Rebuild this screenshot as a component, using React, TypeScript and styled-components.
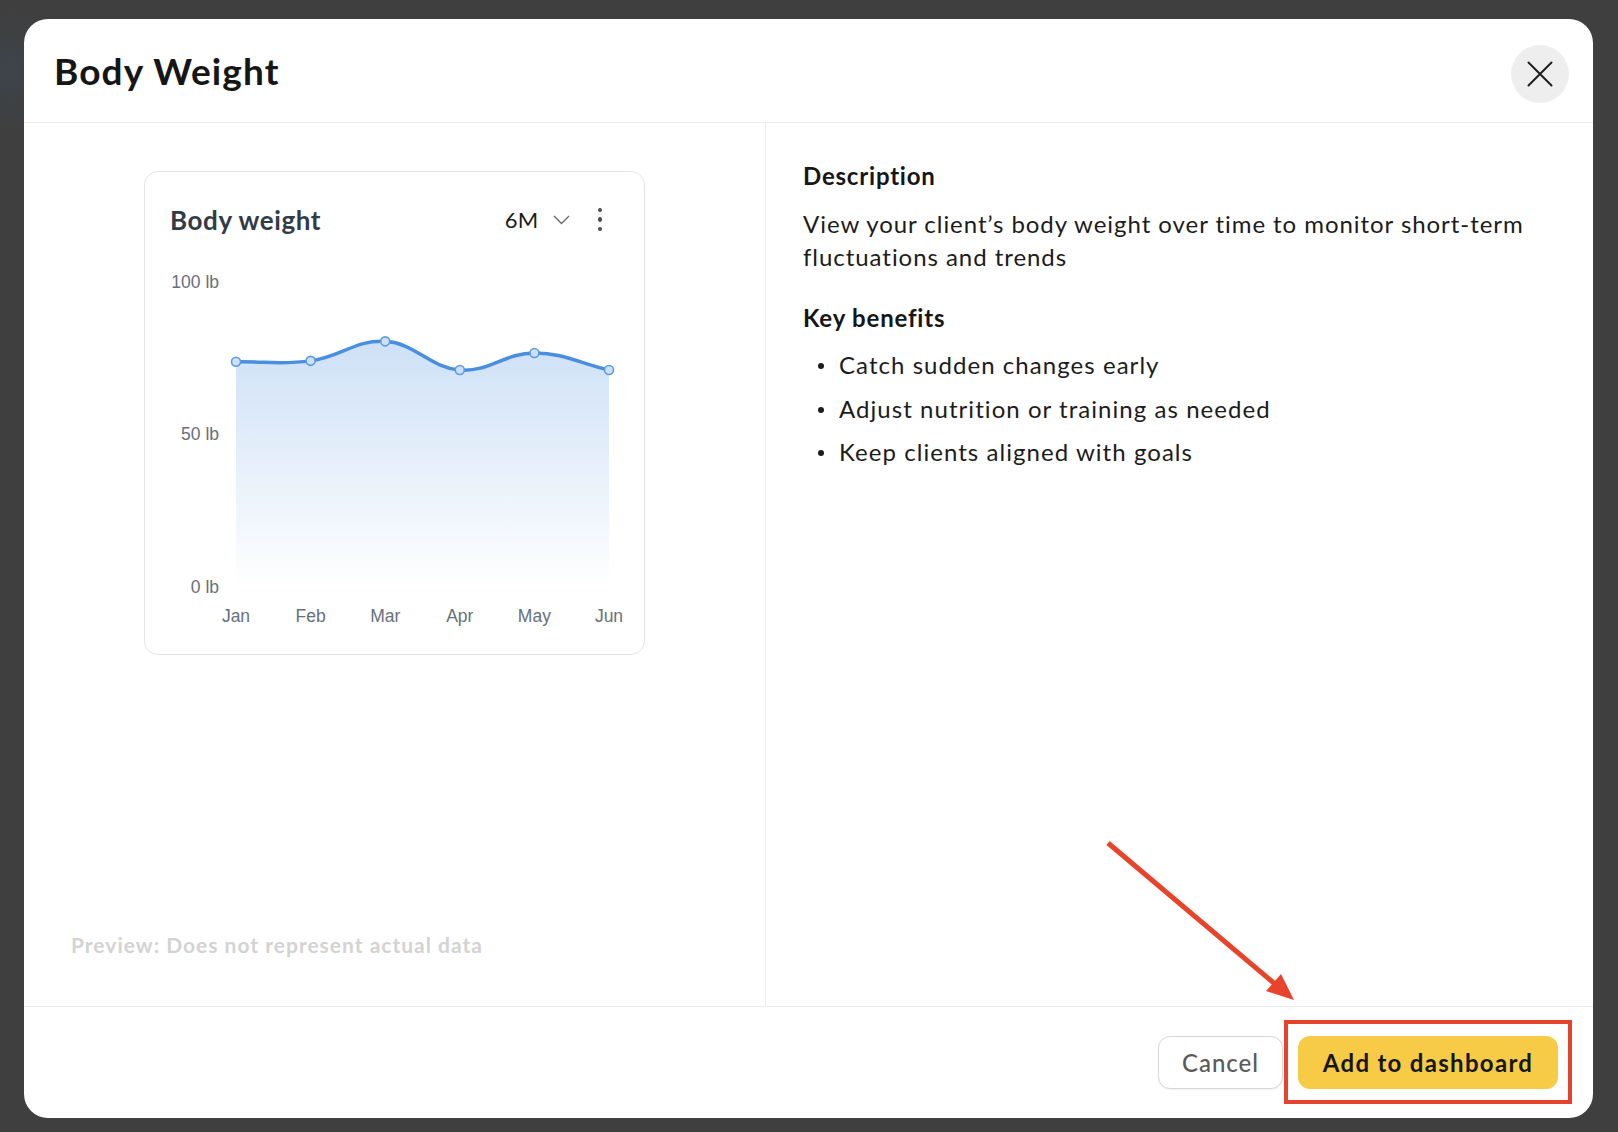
import styled, { createGlobalStyle } from 'styled-components';

const GlobalStyle = createGlobalStyle`
  html, body {
    margin: 0;
    padding: 0;
  }
  body {
    background: #3f3f3f;
    font-family: 'Lato', 'Noto Sans', sans-serif;
    color: #1a1a1a;
  }
  * {
    box-sizing: border-box;
  }
`;

const Backdrop = styled.div`
  position: relative;
  width: 100vw;
  height: 100vh;
  padding: 19px 25px 14px 24px;
  display: flex;
  background:
    radial-gradient(ellipse 40px 60px at 10px 70px, rgba(60, 72, 82, 0.6), transparent),
    #3f3f3f;
  overflow: hidden;
`;

const Modal = styled.div`
  flex: 1;
  display: flex;
  flex-direction: column;
  background: #fff;
  border-radius: 24px;
  overflow: hidden;
`;

const Header = styled.header`
  height: 104px;
  flex-shrink: 0;
  display: flex;
  align-items: center;
  justify-content: space-between;
  padding: 0 24px 0 30px;
  border-bottom: 1px solid #ececec;
`;

const Title = styled.h1`
  margin: 0;
  font-size: 37px;
  font-weight: 700;
  color: #161616;
  letter-spacing: 1.1px;
`;

const CloseButton = styled.button`
  width: 58px;
  height: 58px;
  border-radius: 50%;
  border: none;
  background: #eeeeee;
  display: flex;
  align-items: center;
  justify-content: center;
  cursor: pointer;
  margin-top: 6px;
  padding: 0;
`;

const Body = styled.div`
  flex: 1;
  display: grid;
  grid-template-columns: 742px 1fr;
  min-height: 0;
`;

const PreviewPane = styled.section`
  display: flex;
  flex-direction: column;
  align-items: center;
  justify-content: space-between;
  border-right: 1px solid #ececec;
  padding: 48px 0 49px;
`;

const PreviewNote = styled.p`
  align-self: flex-start;
  margin: 0 0 0 47px;
  font-size: 21px;
  font-weight: 700;
  letter-spacing: 1px;
  color: #d3d3d3;
`;

const Card = styled.div`
  width: 501px;
  height: 484px;
  border: 1.5px solid #e4e4e4;
  border-radius: 14px;
  display: flex;
  flex-direction: column;
`;

const CardHeader = styled.div`
  height: 97px;
  flex-shrink: 0;
  display: flex;
  align-items: center;
  padding: 0 32px 2px 25px;
`;

const CardTitle = styled.h3`
  margin: 0;
  flex: 1;
  font-size: 26px;
  font-weight: 700;
  letter-spacing: 0.6px;
  color: #333b47;
`;

const RangePicker = styled.div`
  display: flex;
  align-items: center;
  gap: 14px;
  font-size: 22px;
  letter-spacing: 0.3px;
  color: #1c1c1c;
  margin-right: 18px;
`;

const Kebab = styled.div`
  display: flex;
  flex-direction: column;
  gap: 5px;
  padding: 0 10px;

  span {
    width: 4.5px;
    height: 4.5px;
    border-radius: 50%;
    background: #4d4d4d;
  }
`;

const ChartSvg = styled.svg`
  display: block;
  width: 100%;
  flex: 1;
  font-family: 'Liberation Sans', Arial, sans-serif;
`;

const InfoPane = styled.section`
  padding: 38px 37px 0;
`;

const Heading = styled.h2`
  margin: 0;
  font-size: 24px;
  line-height: 30px;
  font-weight: 700;
  letter-spacing: 0.8px;
  color: #161616;
`;

const Paragraph = styled.p`
  margin: 16px 0 30px;
  font-size: 24px;
  line-height: 33px;
  letter-spacing: 0.95px;
  color: #1c1c1c;
`;

const Benefits = styled.ul`
  list-style: none;
  margin: 15px 0 0;
  padding: 0 0 0 36px;
  display: flex;
  flex-direction: column;
  gap: 10.5px;
`;

const Benefit = styled.li`
  position: relative;
  font-size: 24px;
  line-height: 33px;
  letter-spacing: 1.05px;
  color: #1c1c1c;

  &::before {
    content: '';
    position: absolute;
    left: -21px;
    top: 15px;
    width: 6px;
    height: 6px;
    border-radius: 50%;
    background: #1c1c1c;
  }
`;

const Footer = styled.footer`
  height: 112px;
  flex-shrink: 0;
  border-top: 1px solid #ececec;
  display: flex;
  align-items: center;
  justify-content: flex-end;
  gap: 15px;
  padding: 0 35px 0 0;
`;

const Button = styled.button<{ $primary?: boolean }>`
  width: ${(p) => (p.$primary ? '260px' : '125px')};
  height: 53px;
  padding: 0;
  border-radius: 12px;
  font-family: 'Lato', 'Noto Sans', sans-serif;
  font-size: 24px;
  font-weight: ${(p) => (p.$primary ? 700 : 500)};
  letter-spacing: ${(p) => (p.$primary ? '1.3px' : '1px')};
  cursor: pointer;
  border: ${(p) => (p.$primary ? 'none' : '1px solid #d8d8d8')};
  background: ${(p) => (p.$primary ? '#f7cb46' : '#fff')};
  color: ${(p) => (p.$primary ? '#161616' : '#5a5a5c')};
  box-shadow: ${(p) => (p.$primary ? 'none' : '0 1px 2px rgba(0, 0, 0, 0.06)')};
`;

const Highlight = styled.div`
  position: absolute;
  left: 1284px;
  top: 1020px;
  width: 288px;
  height: 84px;
  border: 4px solid #e5432b;
  pointer-events: none;
`;

const Pointer = styled.svg`
  position: absolute;
  left: 1100px;
  top: 835px;
  pointer-events: none;
`;

type Pt = { x: number; y: number };

const months = ['Jan', 'Feb', 'Mar', 'Apr', 'May', 'Jun'];
const weights = [74.5, 74.8, 81.2, 71.8, 77.4, 71.8];

// chart geometry, in the svg's own units
const xAt = (i: number) => 91 + i * 74.6;
const yAt = (lb: number) => 320 - lb * 3.05;

function splinePath(pts: Pt[], tension = 0.4) {
  const ctrl = pts.map((cur, i) => {
    const prev = pts[i - 1] ?? cur;
    const next = pts[i + 1] ?? cur;
    const d01 = Math.hypot(cur.x - prev.x, cur.y - prev.y);
    const d12 = Math.hypot(next.x - cur.x, next.y - cur.y);
    const s01 = d01 / (d01 + d12 || 1);
    const s12 = d12 / (d01 + d12 || 1);
    const fa = tension * s01;
    const fb = tension * s12;
    return {
      prev: { x: cur.x - fa * (next.x - prev.x), y: cur.y - fa * (next.y - prev.y) },
      next: { x: cur.x + fb * (next.x - prev.x), y: cur.y + fb * (next.y - prev.y) },
    };
  });
  let d = `M${pts[0].x},${pts[0].y}`;
  for (let i = 1; i < pts.length; i++) {
    const a = ctrl[i - 1].next;
    const b = ctrl[i].prev;
    d += ` C${a.x},${a.y} ${b.x},${b.y} ${pts[i].x},${pts[i].y}`;
  }
  return d;
}

function WeightChart() {
  const pts = weights.map((w, i) => ({ x: xAt(i), y: yAt(w) }));
  const line = splinePath(pts);
  const area = `${line} L${pts[pts.length - 1].x},${yAt(0)} L${pts[0].x},${yAt(0)} Z`;

  return (
    <ChartSvg viewBox="0 0 499 385" preserveAspectRatio="none">
      <defs>
        <linearGradient id="weightFill" x1="0" y1="0" x2="0" y2="1">
          <stop offset="0%" stopColor="#4a8ee0" stopOpacity="0.27" />
          <stop offset="100%" stopColor="#4a8ee0" stopOpacity="0" />
        </linearGradient>
      </defs>
      {[100, 50, 0].map((lb) => (
        <text key={lb} x={74} y={yAt(lb) - 1} textAnchor="end" dominantBaseline="middle" fontSize="17.5" fill="#68707c">
          {lb} lb
        </text>
      ))}
      <path d={area} fill="url(#weightFill)" />
      <path d={line} fill="none" stroke="#4a8ee0" strokeWidth="3.5" />
      {pts.map((p, i) => (
        <circle key={i} cx={p.x} cy={p.y} r="4.5" fill="#cfe0f6" stroke="#5b9be4" strokeWidth="1.6" />
      ))}
      {months.map((m, i) => (
        <text key={m} x={xAt(i)} y={348} textAnchor="middle" dominantBaseline="middle" fontSize="17.5" fill="#68707c">
          {m}
        </text>
      ))}
    </ChartSvg>
  );
}

export default function App() {
  return (
    <Backdrop>
      <GlobalStyle />
      <Modal>
        <Header>
          <Title>Body Weight</Title>
          <CloseButton aria-label="Close">
            <svg width="26" height="26" viewBox="0 0 26 26">
              <path d="M1.5 1.5 L24.5 24.5 M24.5 1.5 L1.5 24.5" stroke="#1f1f1f" strokeWidth="2" strokeLinecap="round" />
            </svg>
          </CloseButton>
        </Header>

        <Body>
          <PreviewPane>
            <Card>
              <CardHeader>
                <CardTitle>Body weight</CardTitle>
                <RangePicker>
                  6M
                  <svg width="17" height="10" viewBox="0 0 17 10">
                    <path d="M1 1 L8.5 8.5 L16 1" fill="none" stroke="#6b6b6b" strokeWidth="1.4" />
                  </svg>
                </RangePicker>
                <Kebab>
                  <span />
                  <span />
                  <span />
                </Kebab>
              </CardHeader>
              <WeightChart />
            </Card>
            <PreviewNote>Preview: Does not represent actual data</PreviewNote>
          </PreviewPane>

          <InfoPane>
            <Heading>Description</Heading>
            <Paragraph>
              View your client’s body weight over time to monitor short-term fluctuations and trends
            </Paragraph>
            <Heading>Key benefits</Heading>
            <Benefits>
              <Benefit>Catch sudden changes early</Benefit>
              <Benefit>Adjust nutrition or training as needed</Benefit>
              <Benefit>Keep clients aligned with goals</Benefit>
            </Benefits>
          </InfoPane>
        </Body>

        <Footer>
          <Button>Cancel</Button>
          <Button $primary>Add to dashboard</Button>
        </Footer>
      </Modal>

      <Pointer width="210" height="175" viewBox="0 0 210 175">
        <line x1="8" y1="8" x2="175" y2="149" stroke="#e8442b" strokeWidth="5" />
        <polygon points="194,165 166,156 181,139" fill="#e8442b" />
      </Pointer>
      <Highlight />
    </Backdrop>
  );
}
